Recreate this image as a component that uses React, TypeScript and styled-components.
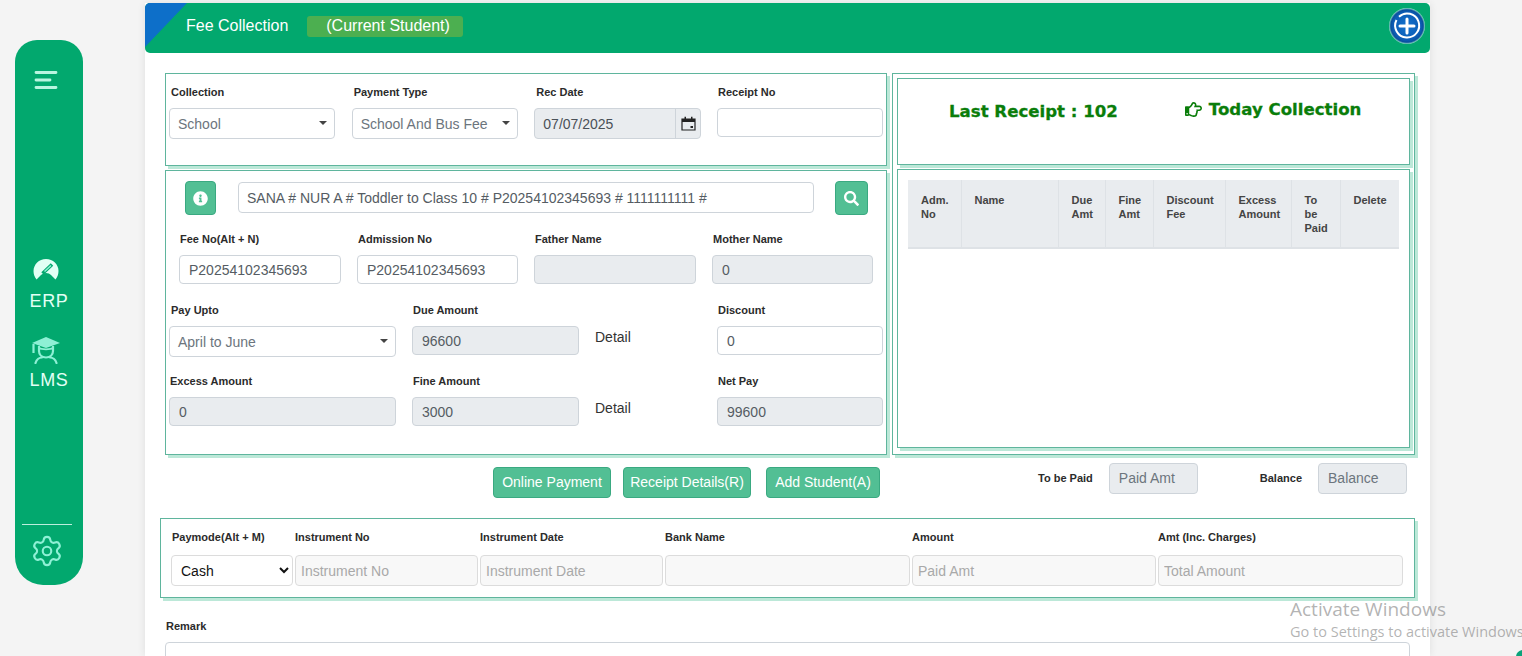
import * as React from 'react'
import styled, { createGlobalStyle } from 'styled-components'
import { Settings } from 'lucide-react'
import { FaInfoCircle, FaSearch, FaRegHandPointRight } from 'react-icons/fa'

const GlobalStyle = createGlobalStyle`
  html, body {
    margin: 0;
    height: 656px;
    overflow: hidden;
    background: #f4f4f4;
    font-family: "Liberation Sans", Arial, sans-serif;
  }
  * { box-sizing: border-box; }
`

const Page = styled.div`
  position: relative;
  display: flex;
  height: 656px;
  padding: 3px 0 0 15px;
  overflow: hidden;
`

const Sidebar = styled.aside`
  flex: none;
  display: flex;
  flex-direction: column;
  align-items: center;
  width: 68px;
  height: 545px;
  margin: 37px 62px 0 0;
  padding-top: 30px;
  background: #02a86e;
  border-radius: 22px 22px 28px 28px;
  color: #e2fff5;
`

const MenuIcon = styled.svg`
  width: 24px;
  height: 20px;
  margin: 0 6px 168px 0;
`

const NavItem = styled.div<{ $gap?: number; $iconGap: number }>`
  display: flex;
  flex-direction: column;
  align-items: center;
  margin-bottom: ${({ $gap }) => $gap ?? 0}px;
  font-size: 18px;
  line-height: 20px;
  letter-spacing: 0.6px;
  svg { display: block; margin: 0 6px ${({ $iconGap }) => $iconGap}px 0; }
`

const SideFoot = styled.div`
  display: flex;
  justify-content: center;
  width: 50px;
  margin: auto 4px 17px 0;
  padding-top: 9px;
  border-top: 1px solid #bdeedd;
  color: #8ef0d5;
`

const Panel = styled.main`
  flex: none;
  width: 1285px;
  background: #fff;
  box-shadow: 0 0 8px rgba(0, 0, 0, 0.09);
`

const Header = styled.header`
  position: relative;
  display: flex;
  align-items: center;
  height: 50px;
  padding: 0 5px 4px 41px;
  background: #02a86e;
  border-radius: 5px;
  overflow: hidden;
  color: #fff;
  font-size: 16px;
`

const Corner = styled.div`
  position: absolute;
  top: 0;
  left: 0;
  width: 42px;
  height: 44px;
  background: #0d6fc9;
  clip-path: polygon(0 0, 100% 0, 0 100%);
`

const Badge = styled.span`
  margin: 1px 0 0 19px;
  padding: 0 13px 0 19px;
  height: 21px;
  line-height: 19px;
  background: #4caf50;
  border-radius: 3px;
`

const PlusButton = styled.svg`
  width: 36px;
  height: 36px;
  margin: 0 0 0 auto;
`

const Body = styled.div`
  padding: 20px 15px 0;
`

const TopGrid = styled.div`
  display: grid;
  grid-template-columns: 722px 523px;
  gap: 5px;
  margin-left: 5px;
`

const Column = styled.div`
  display: flex;
  flex-direction: column;
  gap: 4px;
`

const Box = styled.section<{ $h?: number }>`
  height: ${({ $h }) => ($h ? `${$h}px` : 'auto')};
  border: 1px solid #5fb59d;
  box-shadow: 3px 3px 0 #bce8d8;
  background: #fff;
`

const OuterBox = styled(Box)`
  display: flex;
  flex-direction: column;
  gap: 4px;
  padding: 4px 4px 6px;
`

const ReceiptRow = styled.div`
  display: grid;
  grid-template-columns: repeat(4, 166px);
  column-gap: 16.67px;
  padding: 10px 0 0 3px;
`

const Field = styled.div`
  min-width: 0;
`

const Label = styled.div<{ $inset?: number }>`
  height: 16px;
  margin-bottom: 8px;
  padding-left: ${({ $inset }) => $inset ?? 1}px;
  color: #2b2b2b;
  font-size: 11px;
  font-weight: 700;
  line-height: 16px;
  white-space: nowrap;
`

const Input = styled.input<{ $h?: number; $off?: boolean }>`
  display: block;
  width: 100%;
  height: ${({ $h }) => $h ?? 29}px;
  padding: 0 9px;
  border: 1px solid #ced4da;
  border-radius: 4px;
  outline: none;
  background: ${({ $off }) => ($off ? '#e9ecef' : '#fff')};
  color: #555c63;
  font: 14px "Liberation Sans", Arial, sans-serif;
  &::placeholder { color: #6c757d; opacity: 1; }
`

const FaintInput = styled(Input)`
  padding: 0 5px;
  background: #f8f8f8;
  border-color: #dcdcdc;
  &::placeholder { color: #a9a9a9; }
`

const DropBox = styled.div`
  position: relative;
  display: flex;
  align-items: center;
  height: 31px;
  padding: 0 8px;
  border: 1px solid #ced4da;
  border-radius: 4px;
  background: #fff;
  color: #6c757d;
  font-size: 14px;
  &::after {
    content: '';
    position: absolute;
    top: 12px;
    right: 7px;
    border-top: 4px solid #444;
    border-left: 4px solid transparent;
    border-right: 4px solid transparent;
  }
`

const DateGroup = styled.div`
  display: flex;
  align-items: stretch;
  height: 31px;
  margin-right: -1px;
  border: 1px solid #ced4da;
  border-radius: 4px;
  overflow: hidden;
  background: #e9ecef;
  color: #495057;
  font-size: 14px;
`

const DateValue = styled.div`
  flex: 1;
  padding: 1px 0 0 8px;
  line-height: 29px;
`

const DateAddon = styled.div`
  display: flex;
  align-items: center;
  justify-content: center;
  width: 25px;
  border-left: 1px solid #ced4da;
`

const SearchRow = styled.div`
  display: grid;
  grid-template-columns: 31px 577px 33px;
  align-items: start;
  column-gap: 21px;
  padding: 10px 0 0 19px;
  margin-bottom: 16px;
`

const IconButton = styled.button`
  display: flex;
  align-items: center;
  justify-content: center;
  height: 34px;
  padding: 0;
  border: 1px solid #3aa981;
  border-radius: 4px;
  background: #52bf94;
  color: #fff;
  font-size: 15px;
`

const SearchInput = styled(Input)`
  justify-self: end;
  width: 576px;
  height: 31px;
  margin-top: 1px;
  padding-left: 8px;
`

const FeeGrid = styled.div`
  display: grid;
  grid-template-columns: 162px 161px 162px 161px;
  column-gap: 16px;
  padding-left: 13px;
  margin-bottom: 18px;
`

const PayGrid = styled.div`
  display: grid;
  grid-template-columns: 227px 167px 106px 166px;
  column-gap: 16px;
  padding-left: 3px;
  margin-bottom: 16px;
`

const Detail = styled.div`
  padding-top: 20px;
  color: #333;
  font-size: 14px;
  line-height: 31px;
`

const ActionRow = styled.div`
  display: flex;
  align-items: flex-start;
  height: 63px;
  padding: 8px 8px 0 333px;
`

const Button = styled.button<{ $w: number; $ml?: number }>`
  flex: none;
  width: ${({ $w }) => $w}px;
  height: 31px;
  margin: 4px 0 0 ${({ $ml }) => $ml ?? 0}px;
  padding: 0 0 2px;
  border: 1px solid #3aa981;
  border-radius: 4px;
  background: #52bf94;
  color: #fff;
  font: 14px "Liberation Sans", Arial, sans-serif;
  white-space: nowrap;
`

const SumLabel = styled.span<{ $ml: number }>`
  margin: 8px 16px 0 ${({ $ml }) => $ml}px;
  color: #2b2b2b;
  font-size: 11px;
  font-weight: 700;
  line-height: 15px;
  white-space: nowrap;
`

const SumInput = styled(Input)`
  flex: none;
  width: 89px;
  height: 31px;
  padding-bottom: 2px;
`

const PayBox = styled(Box)`
  display: grid;
  grid-template-columns: 122px 183px 183px 245px 244px 245px;
  column-gap: 2px;
  height: 80px;
  padding: 10px 0 0 10px;
  ${Label} { margin-bottom: 10px; }
`

const ModeSelect = styled.select`
  display: block;
  width: 100%;
  height: 31px;
  padding: 0 0 0 5px;
  border: 1px solid #dcdcdc;
  border-radius: 4px;
  background: #fff;
  color: #111;
  font: 14px "Liberation Sans", Arial, sans-serif;
`

const RemarkWrap = styled.div`
  padding: 20px 5px 0;
`

const RemarkBox = styled.textarea`
  display: block;
  width: 100%;
  height: 60px;
  border: 1px solid #ced4da;
  border-radius: 4px;
  resize: none;
  outline: none;
`

const TitleRow = styled(Box)`
  display: flex;
  align-items: flex-start;
  height: 87px;
  color: #0a7d0a;
  font-family: "DejaVu Sans", Verdana, sans-serif;
  font-size: 16.6px;
  font-weight: 700;
  -webkit-text-stroke: 0.3px #0a7d0a;
`

const LastReceipt = styled.div`
  margin: 23px 0 0 51px;
  line-height: 19px;
`

const TodayLink = styled.div`
  display: flex;
  align-items: center;
  gap: 7px;
  margin: 21px 0 0 67px;
  line-height: 19px;
`

const TableBox = styled(Box)`
  flex: 1;
  padding: 10px 10px 0;
`

const Table = styled.table`
  width: 491px;
  border-collapse: collapse;
  table-layout: fixed;
  th {
    padding: 13px 11px 12px 13px;
    background: #e9ecef;
    border-right: 1px solid #dee2e6;
    border-bottom: 2px solid #dee2e6;
    color: #444;
    font-size: 11px;
    font-weight: 700;
    line-height: 14px;
    text-align: left;
    vertical-align: top;
  }
  th:last-child { border-right: none; }
`

const Watermark = styled.div`
  position: absolute;
  top: 596px;
  left: 1290px;
  color: rgba(115, 115, 115, 0.55);
  font-family: "Open Sans", sans-serif;
  white-space: nowrap;
  pointer-events: none;
`

const WatermarkTitle = styled.div`
  font-size: 19px;
  line-height: 26px;
`

const WatermarkSub = styled.div`
  font-size: 14.5px;
  line-height: 20px;
`

const CornerMark = styled.div`
  position: absolute;
  right: -8px;
  bottom: -8px;
  width: 14px;
  height: 14px;
  border-radius: 50%;
  background: #0aa37a;
`

const columns: { title: string; width: number }[] = [
  { title: 'Adm. No', width: 53 },
  { title: 'Name', width: 97 },
  { title: 'Due Amt', width: 47 },
  { title: 'Fine Amt', width: 48 },
  { title: 'Discount Fee', width: 72 },
  { title: 'Excess Amount', width: 66 },
  { title: 'To be Paid', width: 49 },
  { title: 'Delete', width: 59 },
]

const Gauge = () => (
  <svg width="26" height="24" viewBox="0 0 26 24">
    <path d="M13 1C6 1 .5 6.500 .5 13c0 3 1 6 3 8.500L8 17c1.500-1.300 3-2 5-2s3.800.7 5 2l4.500 4.500c2-2.500 3-5.500 3-8.500C25.500 6.500 20 1 13 1z" fill="#e2fff5" />
    <path d="M9.500 15.500 19 6.500" stroke="#02a86e" strokeWidth="3.500" />
    <path d="M11.500 13.500 18 7.500" stroke="#8ef0d5" strokeWidth="1.500" />
  </svg>
)

const Cap = () => (
  <svg width="28" height="27" viewBox="0 0 28 27" fill="none">
    <path d="M0 6 14 0l14 6-14 5z" fill="#8ef0d5" />
    <path d="M1.500 7v9M7 9v5c0 4 3 6.500 7 6.500s7-2.500 7-6.500V9" stroke="#8ef0d5" strokeWidth="2.200" />
    <path d="M6 9.500c4 2.500 12 2.500 16 0v2.500c-4 1.500-12 1.500-16 0z" fill="#8ef0d5" />
    <path d="M3.500 26c1-3.500 4-5.500 6.500-5.500M24.500 26c-1-3.500-4-5.500-6.500-5.500" stroke="#8ef0d5" strokeWidth="2.200" strokeLinecap="round" />
  </svg>
)

const CalendarIcon = () => (
  <svg width="15" height="15" viewBox="0 0 15 15">
    <path d="M1 3h13v11H1z" fill="none" stroke="#222" strokeWidth="1.200" />
    <path d="M1 3h13v3H1zM3.500 .8h1.500v3H3.500zM10 .8h1.500v3H10zM9.500 10H12v2H9.500z" fill="#222" />
  </svg>
)

const App = () => (
  <>
    <GlobalStyle />
    <Page>
      <Sidebar>
        <MenuIcon viewBox="0 0 24 20">
          <path d="M2 2.500h20M2 10h14M2 17.500h20" stroke="#b9f5e0" strokeWidth="2.800" strokeLinecap="round" />
        </MenuIcon>
        <NavItem $gap={26} $iconGap={9}>
          <Gauge />
          ERP
        </NavItem>
        <NavItem $iconGap={6}>
          <Cap />
          LMS
        </NavItem>
        <SideFoot>
          <Settings size={34} strokeWidth={1.5} />
        </SideFoot>
      </Sidebar>

      <Panel>
        <Header>
          <Corner />
          Fee Collection
          <Badge>(Current Student)</Badge>
          <PlusButton viewBox="0 0 36 36">
            <defs>
              <radialGradient id="glow" cx="50%" cy="50%" r="50%">
                <stop offset="0%" stopColor="#1473cf" />
                <stop offset="78%" stopColor="#0c5cb4" />
                <stop offset="90%" stopColor="#0b4f9e" />
                <stop offset="100%" stopColor="#8fdcc4" />
              </radialGradient>
            </defs>
            <circle cx="18" cy="18" r="18" fill="url(#glow)" />
            <path d="M10 8.700A12 12 0 1 1 7.500 12" fill="none" stroke="#fff" strokeWidth="2" />
            <path d="M18 11v14M11 18h14" stroke="#fff" strokeWidth="3" strokeLinecap="round" />
          </PlusButton>
        </Header>

        <Body>
          <TopGrid>
            <Column>
              <Box $h={93}>
                <ReceiptRow>
                  <Field>
                    <Label $inset={2}>Collection</Label>
                    <DropBox>School</DropBox>
                  </Field>
                  <Field>
                    <Label $inset={2}>Payment Type</Label>
                    <DropBox>School And Bus Fee</DropBox>
                  </Field>
                  <Field>
                    <Label $inset={2}>Rec Date</Label>
                    <DateGroup>
                      <DateValue>07/07/2025</DateValue>
                      <DateAddon>
                        <CalendarIcon />
                      </DateAddon>
                    </DateGroup>
                  </Field>
                  <Field>
                    <Label>Receipt No</Label>
                    <Input readOnly />
                  </Field>
                </ReceiptRow>
              </Box>

              <Box $h={285}>
                <SearchRow>
                  <IconButton>
                    <FaInfoCircle />
                  </IconButton>
                  <SearchInput readOnly value="SANA # NUR A # Toddler to Class 10 # P20254102345693 # 1111111111 #" />
                  <IconButton>
                    <FaSearch />
                  </IconButton>
                </SearchRow>

                <FeeGrid>
                  <Field>
                    <Label>Fee No(Alt + N)</Label>
                    <Input readOnly value="P20254102345693" />
                  </Field>
                  <Field>
                    <Label>Admission No</Label>
                    <Input readOnly value="P20254102345693" />
                  </Field>
                  <Field>
                    <Label>Father Name</Label>
                    <Input readOnly $off />
                  </Field>
                  <Field>
                    <Label>Mother Name</Label>
                    <Input readOnly $off value="0" />
                  </Field>
                </FeeGrid>

                <PayGrid>
                  <Field>
                    <Label $inset={2}>Pay Upto</Label>
                    <DropBox>April to June</DropBox>
                  </Field>
                  <Field>
                    <Label>Due Amount</Label>
                    <Input readOnly $off value="96600" />
                  </Field>
                  <Detail>Detail</Detail>
                  <Field>
                    <Label>Discount</Label>
                    <Input readOnly value="0" />
                  </Field>
                </PayGrid>

                <PayGrid>
                  <Field>
                    <Label>Excess Amount</Label>
                    <Input readOnly $off value="0" />
                  </Field>
                  <Field>
                    <Label>Fine Amount</Label>
                    <Input readOnly $off value="3000" />
                  </Field>
                  <Detail>Detail</Detail>
                  <Field>
                    <Label>Net Pay</Label>
                    <Input readOnly $off value="99600" />
                  </Field>
                </PayGrid>
              </Box>
            </Column>

            <OuterBox $h={382}>
              <TitleRow>
                <LastReceipt>Last Receipt : 102</LastReceipt>
                <TodayLink>
                  <FaRegHandPointRight size={17} />
                  Today Collection
                </TodayLink>
              </TitleRow>
              <TableBox>
                <Table>
                  <colgroup>
                    {columns.map((c, i) => (
                      <col key={i} style={{ width: c.width }} />
                    ))}
                  </colgroup>
                  <thead>
                    <tr>
                      {columns.map((c, i) => (
                        <th key={i}>{c.title}</th>
                      ))}
                    </tr>
                  </thead>
                </Table>
              </TableBox>
            </OuterBox>
          </TopGrid>

          <ActionRow>
            <Button $w={118}>Online Payment</Button>
            <Button $w={128} $ml={12}>Receipt Details(R)</Button>
            <Button $w={114} $ml={15}>Add Student(A)</Button>
            <SumLabel $ml={158}>To be Paid</SumLabel>
            <SumInput readOnly $off placeholder="Paid Amt" />
            <SumLabel $ml={62}>Balance</SumLabel>
            <SumInput readOnly $off placeholder="Balance" />
          </ActionRow>

          <PayBox>
            <Field>
              <Label>Paymode(Alt + M)</Label>
              <ModeSelect defaultValue="Cash">
                <option>Cash</option>
              </ModeSelect>
            </Field>
            <Field>
              <Label $inset={0}>Instrument No</Label>
              <FaintInput $h={31} readOnly placeholder="Instrument No" />
            </Field>
            <Field>
              <Label $inset={0}>Instrument Date</Label>
              <FaintInput $h={31} readOnly placeholder="Instrument Date" />
            </Field>
            <Field>
              <Label $inset={0}>Bank Name</Label>
              <FaintInput $h={31} readOnly />
            </Field>
            <Field>
              <Label $inset={0}>Amount</Label>
              <FaintInput $h={31} readOnly placeholder="Paid Amt" />
            </Field>
            <Field>
              <Label $inset={0}>Amt (Inc. Charges)</Label>
              <FaintInput $h={31} readOnly placeholder="Total Amount" />
            </Field>
          </PayBox>

          <RemarkWrap>
            <Label>Remark</Label>
            <RemarkBox readOnly />
          </RemarkWrap>
        </Body>
      </Panel>

      <Watermark>
        <WatermarkTitle>Activate Windows</WatermarkTitle>
        <WatermarkSub>Go to Settings to activate Windows.</WatermarkSub>
      </Watermark>
      <CornerMark />
    </Page>
  </>
)

export default App
